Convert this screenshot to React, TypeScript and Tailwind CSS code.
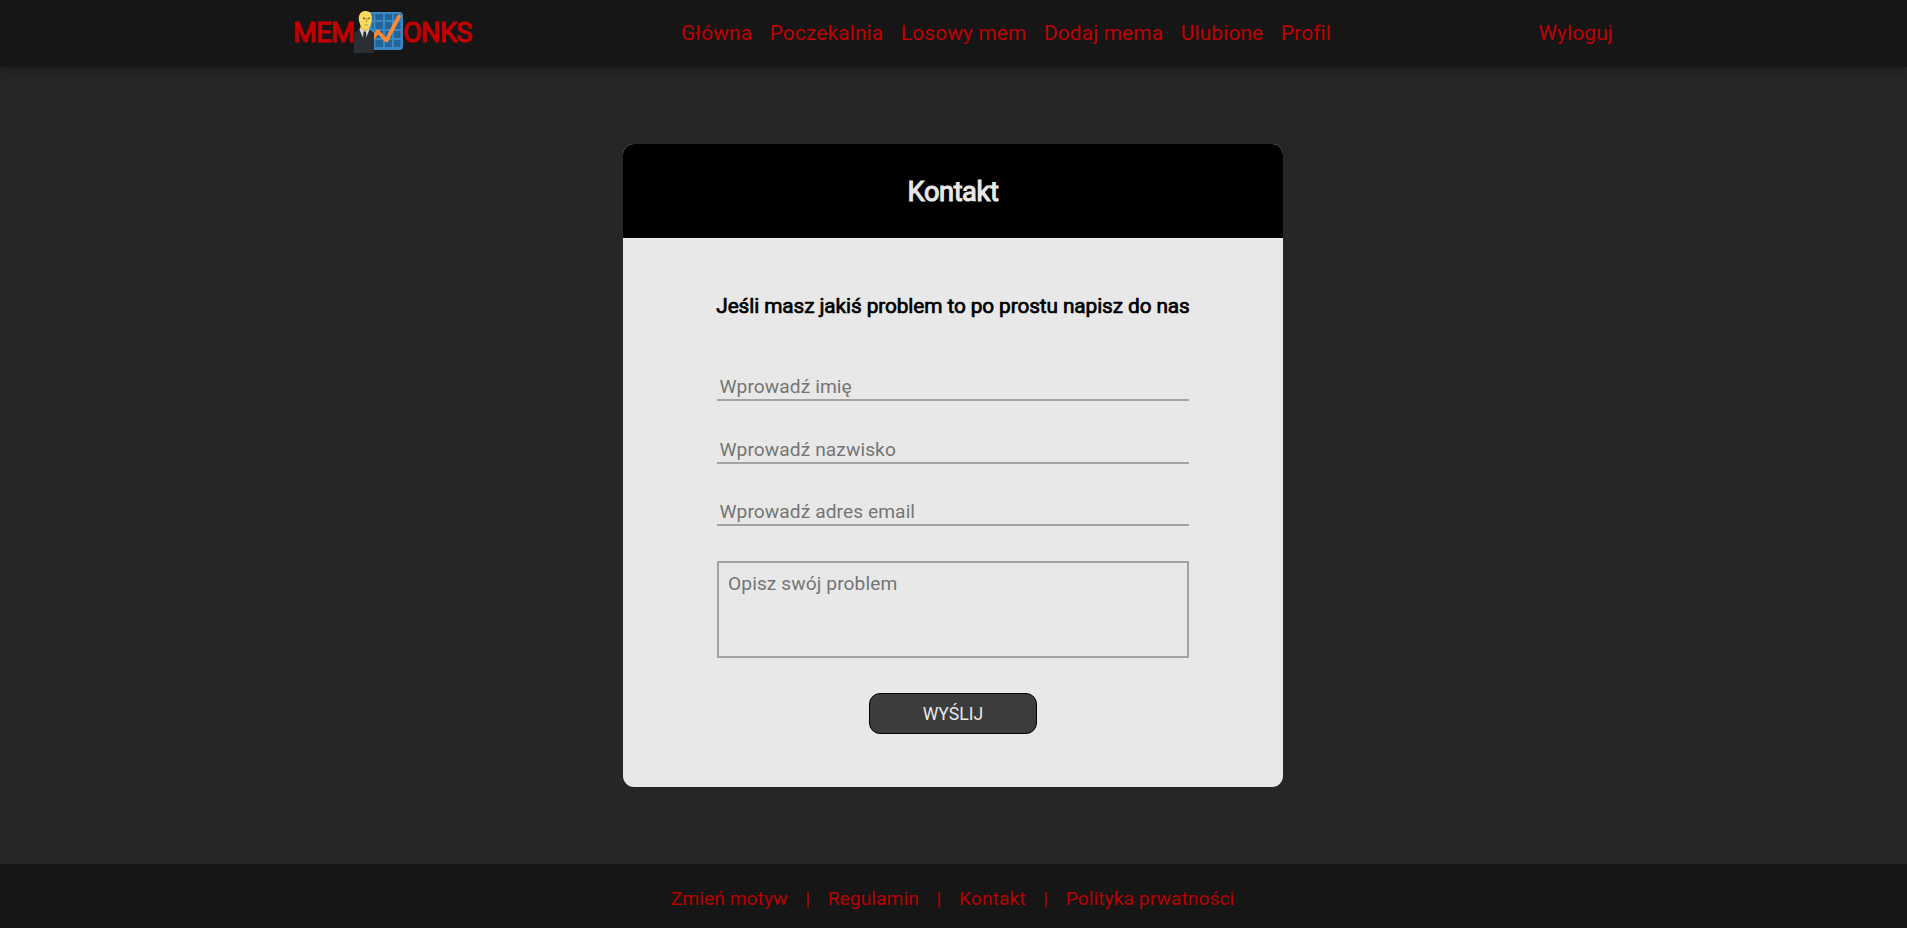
const navItems = ["Główna", "Poczekalnia", "Losowy mem", "Dodaj mema", "Ulubione", "Profil"];
const footerItems = ["Zmień motyw", "Regulamin", "Kontakt", "Polityka prwatności"];
const fields = ["Wprowadź imię", "Wprowadź nazwisko", "Wprowadź adres email"];

function Mascot() {
  return (
    <svg viewBox="0 0 50 42" className="h-[42px] w-[50px] shrink-0" aria-hidden="true">
      <rect x="11" y="1" width="38" height="38" rx="3.5" fill="#3b88c3" />
      <g fill="#226699">
        <rect x="14" y="3" width="5.5" height="6" />
        <rect x="21.5" y="3" width="7.5" height="6" />
        <rect x="31" y="3" width="7" height="6" />
        <rect x="40" y="3" width="6.5" height="6" />
        <rect x="18" y="11" width="1.5" height="7" />
        <rect x="21.5" y="11" width="7.5" height="7" />
        <rect x="31" y="11" width="7" height="7" />
        <rect x="40" y="11" width="6.5" height="7" />
        <rect x="21.5" y="20" width="7.5" height="7" />
        <rect x="31" y="20" width="7" height="7" />
        <rect x="40" y="20" width="6.5" height="7" />
        <rect x="21.5" y="29" width="7.5" height="7" />
        <rect x="31" y="29" width="7" height="7" />
        <rect x="40" y="29" width="6.5" height="7" />
      </g>
      <path d="M18.5 28 L23.8 20.5 L32.5 29.5 L45 5.5" fill="none" stroke="#ff8a33" strokeWidth="3.8" strokeLinecap="round" strokeLinejoin="round" />
      <path d="M5 19 L7.5 15 H14 L16 19 L11 31 Z" fill="#d8dde1" />
      <path d="M0 24 V22 L5.5 18.5 L10.5 31 L15.5 18.5 L20 22 V42 H0 Z" fill="#292f33" />
      <path d="M9.5 20.5 H12 L12.5 28 L10.7 31 L9 28 Z" fill="#292f33" />
      <path d="M6.5 13 H15.5 V17.5 L11 20.5 L6.5 17.5 Z" fill="#e5bc50" />
      <path d="M4.8 7.5 C4.8 2.5 7.5 0 11.5 0 C15.8 0 18.2 2.7 17.9 8 C17.6 13 15.5 18 12 18 C8 18 4.9 12.5 4.8 7.5 Z" fill="#ffdc5d" />
      <path d="M8.8 7 L11.4 7.8 M13.6 7.8 L16 7" stroke="#866c2c" strokeWidth="1.5" />
      <path d="M12.6 7.5 V11.3 M10.4 14 H14.2" stroke="#b98e3b" strokeWidth="1.1" fill="none" />
    </svg>
  );
}

export default function App() {
  return (
    <div className="flex h-screen min-h-[928px] flex-col bg-[#262626] font-[Roboto,sans-serif]">
      <header className="h-[67px] shrink-0 bg-[#161616] text-[#c00000] shadow-[0_2px_8px_rgba(0,0,0,0.35)]">
        <div className="mx-auto grid h-full w-[1321px] grid-cols-[388px_1fr_auto] items-center">
          <a href="#" className="flex items-center text-[27.2px] leading-8 tracking-[-0.6px] [-webkit-text-stroke:1.2px_#c00000]">
            <span className="-mt-0.5 w-[61px]">MEM</span>
            <span className="-mt-[3px] flex"><Mascot /></span>
            <span className="-mt-0.5 -ml-px">ONKS</span>
          </a>
          <nav className="flex gap-[17.5px] text-[20.8px] tracking-[0.18px]">
            {navItems.map((item) => (
              <a key={item} href="#" className="whitespace-nowrap">{item}</a>
            ))}
          </nav>
          <a href="#" className="pr-px text-[20.8px] tracking-[0.17px]">Wyloguj</a>
        </div>
      </header>

      <main className="flex flex-1 flex-col items-center pt-[77px] pr-px">
        <section className="flex h-[643px] w-[660px] flex-col overflow-hidden rounded-[11px] bg-[#e8e8e8]">
          <h1 className="flex h-[94px] shrink-0 items-center justify-center bg-black pt-[2px] text-[27.2px] tracking-[-0.4px] text-[#e8e8e8] [-webkit-text-stroke:1.1px_#e8e8e8]">
            Kontakt
          </h1>
          <form className="mx-auto flex w-[472px] flex-col items-center pt-[56px]">
            <h2 className="whitespace-nowrap text-[20.8px] leading-6 tracking-[-0.1px] text-black [-webkit-text-stroke:0.7px_#000]">
              Jeśli masz jakiś problem to po prostu napisz do nas
            </h2>
            <div className="mt-[57px] flex w-full flex-col gap-[36.5px]">
              {fields.map((field) => (
                <input
                  key={field}
                  placeholder={field}
                  className="h-[26px] w-full border-b-2 border-[#a3a3a3] bg-transparent px-[2.5px] pb-px text-[19.2px] leading-[23px] tracking-[0.07px] outline-none placeholder:text-[#757575]"
                />
              ))}
            </div>
            <textarea
              placeholder="Opisz swój problem"
              className="mt-[35px] block h-[97px] w-full resize-none border-2 border-[#a3a3a3] bg-transparent px-[9px] pt-[9px] text-[19.2px] leading-[23px] tracking-[0.08px] outline-none placeholder:text-[#757575]"
            />
            <button
              type="button"
              className="mt-[35px] h-[41px] w-[168px] rounded-[11px] border border-black bg-[#3c3c3c] pt-px text-[17.6px] text-[#e8e8e8]"
            >
              WYŚLIJ
            </button>
          </form>
        </section>
      </main>

      <footer className="flex h-16 shrink-0 items-center justify-center bg-[#161616] pt-[6px] pr-[2px] text-[19.2px] tracking-[0.07px] text-[#b80000]">
        {footerItems.map((item, index) => (
          <span key={item} className="flex whitespace-nowrap">
            {index > 0 && <span className="mx-[17.7px]">|</span>}
            <a href="#">{item}</a>
          </span>
        ))}
      </footer>
    </div>
  );
}
